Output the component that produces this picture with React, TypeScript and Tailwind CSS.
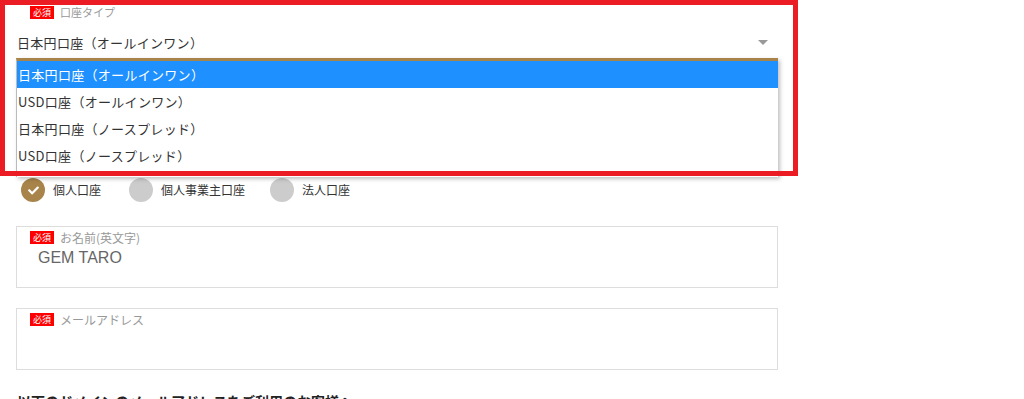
import { FC } from 'react';
import { FaCheck } from 'react-icons/fa';

const jp = { fontFamily: '"Noto Sans CJK JP", "Noto Sans", sans-serif' };

const Required: FC = () => (
  <span className="inline-flex h-[13px] w-[24px] items-center justify-center bg-[#f00] text-[9px] leading-none text-white">
    必須
  </span>
);

interface RadioProps {
  label: string;
  checked?: boolean;
}

const Radio: FC<RadioProps> = ({ label, checked }) => (
  <div className="flex items-center gap-[8px]">
    <span
      className={`flex h-[24px] w-[24px] items-center justify-center rounded-full ${
        checked ? 'bg-[#a8844a]' : 'bg-[#cccccc]'
      }`}
    >
      {checked && <FaCheck className="h-[11px] w-[11px] text-white" />}
    </span>
    <span className="text-[12px] text-[#333]">{label}</span>
  </div>
);

const options = [
  '日本円口座（オールインワン）',
  'USD口座（オールインワン）',
  '日本円口座（ノースプレッド）',
  'USD口座（ノースプレッド）',
];

export default function App() {
  return (
    <div className="relative h-[399px] w-full overflow-hidden bg-white" style={jp}>
      <div className="flex w-[778px] flex-col pl-4">
        {/* 口座タイプ select */}
        <div className="h-[58px]">
          <div className="flex items-center gap-[6px] pl-[14px] pt-[6px]">
            <Required />
            <span className="text-[11px] leading-none text-[#999]">口座タイプ</span>
          </div>
          <div className="flex items-center justify-between pt-[17px] pr-[10px] pl-[1px]">
            <span className="text-[13px] leading-none tracking-[0.3px] text-[#333]">日本円口座（オールインワン）</span>
            <span className="h-0 w-0 border-x-[5px] border-t-[5px] border-x-transparent border-t-[#999]" />
          </div>
        </div>

        {/* 口座区分 */}
        <div className="mt-[120px] flex items-center pl-[5px]">
          <Radio label="個人口座" checked />
          <div className="ml-[28px]">
            <Radio label="個人事業主口座" />
          </div>
          <div className="ml-[25px]">
            <Radio label="法人口座" />
          </div>
        </div>

        {/* お名前 */}
        <div className="mt-[24px] h-[62px] border border-[#dddddd]">
          <div className="flex items-center gap-[6px] pl-[13px] pt-[4px]">
            <Required />
            <span className="text-[12px] leading-none text-[#999]">お名前(英文字)</span>
          </div>
          <div
            className="pl-[21px] pt-[6px] text-[16px] leading-none text-[#666]"
            style={{ fontFamily: '"Liberation Sans", Arial, sans-serif' }}
          >
            GEM TARO
          </div>
        </div>

        {/* メールアドレス */}
        <div className="mt-[20px] h-[62px] border border-[#dddddd]">
          <div className="flex items-center gap-[6px] pl-[13px] pt-[4px]">
            <Required />
            <span className="text-[12px] leading-none text-[#999]">メールアドレス</span>
          </div>
        </div>

        <p className="mt-[21px] pl-[1px] text-[14px] font-bold text-[#222]">
          以下のドメインのメールアドレスをご利用のお客様へ
        </p>
      </div>

      {/* opened dropdown */}
      <div className="absolute left-[16px] top-[58px] w-[762px] border-t-[3px] border-l border-t-[#a8844a] border-l-[#bbb] bg-white shadow-[2px_2px_4px_rgba(0,0,0,0.25)]">
        {options.map((o, i) => (
          <div
            key={o}
            className={`flex h-[27px] items-center pl-[1px] text-[13px] tracking-[0.3px] ${
              i === 0 ? 'bg-[#1e90ff] text-white' : 'text-[#333]'
            }`}
          >
            {o}
          </div>
        ))}
        <div className="h-[8px]" />
      </div>

      {/* annotation */}
      <div className="pointer-events-none absolute left-0 top-0 h-[176px] w-[798px] border-[5px] border-[#ec1c24]" />
    </div>
  );
}
